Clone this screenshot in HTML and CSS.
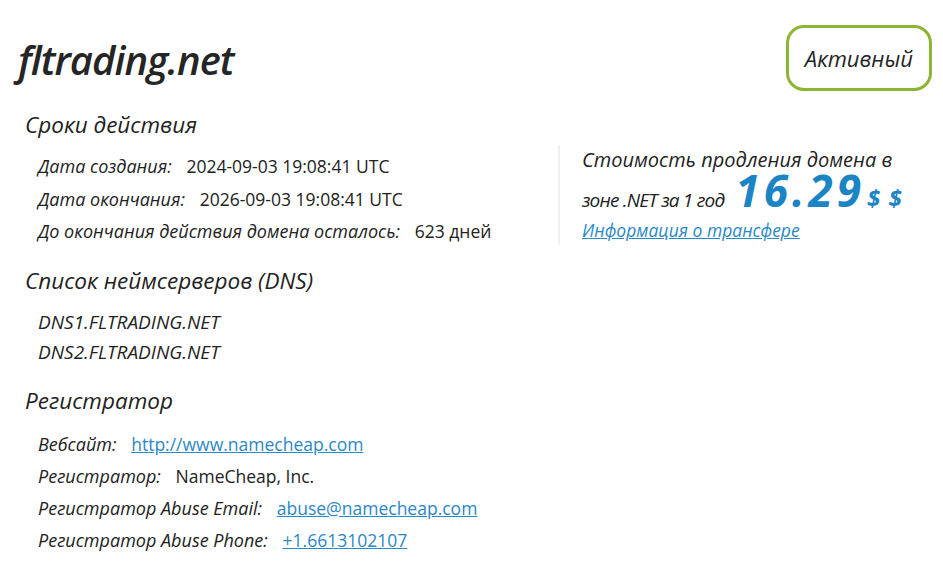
FILE: index.html
```
<!DOCTYPE html>
<html lang="ru">
<head>
    <meta charset="UTF-8">
    <meta name="viewport" content="width=device-width, initial-scale=1.0">
    <title>fltrading.net</title>
    <link rel="stylesheet" href="styles.css">
</head>
<body>
    <div class="page">
        <div class="head">
            <h1 class="domain">fltrading.net</h1>
            <span class="status">Активный</span>
        </div>

        <div class="top">
            <div class="col-main">
                <h2 class="section">Сроки действия</h2>
                <ul class="rows">
                    <li><span class="lbl">Дата создания:</span> <span class="val">2024-09-03 19:08:41 UTC</span></li>
                    <li><span class="lbl">Дата окончания:</span> <span class="val">2026-09-03 19:08:41 UTC</span></li>
                    <li><span class="lbl">До окончания действия домена осталось:</span> <span class="val">623 дней</span></li>
                </ul>
            </div>
            <div class="price">
                <p class="price-text">
                    <span class="price-line">Стоимость продления домена в</span>
                    <span class="price-line big"><span class="zone">зоне .NET за 1 год</span> <span class="amount">16.29</span><span class="cur">$ $</span></span>
                </p>
                <a class="transfer" href="#">Информация о трансфере</a>
            </div>
        </div>

        <h2 class="section">Список неймсерверов (DNS)</h2>
        <ul class="rows dns">
            <li>DNS1.FLTRADING.NET</li>
            <li>DNS2.FLTRADING.NET</li>
        </ul>

        <h2 class="section">Регистратор</h2>
        <ul class="rows reg">
            <li><span class="lbl">Вебсайт:</span> <a class="val" href="#">http://www.namecheap.com</a></li>
            <li><span class="lbl">Регистратор:</span> <span class="val">NameCheap, Inc.</span></li>
            <li><span class="lbl">Регистратор Abuse Email:</span> <a class="val" href="#">abuse@namecheap.com</a></li>
            <li><span class="lbl">Регистратор Abuse Phone:</span> <a class="val" href="#">+1.6613102107</a></li>
        </ul>
    </div>
</body>
</html>
```

FILE: styles.css
```
body { margin: 0; background: #fff; color: #222; font-family: "Open Sans", "DejaVu Sans", sans-serif; }
.page { padding: 20px 11px 0 18px; }
.head { display: flex; justify-content: space-between; align-items: flex-start; }
.domain { margin: 18px 0 0; font-size: 40px; font-weight: 600; font-style: italic; letter-spacing: -1px; line-height: 44px; color: #252525; }
.status { margin: 5px 0 0; padding: 0 16px; height: 60px; line-height: 60px; border: 3px solid #8cb531; border-radius: 18px; font-size: 22px; font-style: italic; font-weight: 500; color: #252525; }
.section { margin: 0; padding-left: 7px; font-size: 22.5px; line-height: 30px; font-weight: 500; font-style: italic; color: #222; }
.top { display: flex; margin-top: 19px; }
.col-main { width: 540px; }
.rows { list-style: none; margin: 0; padding: 10px 0 18px 20px; }
.rows li { font-size: 18px; line-height: 32.5px; }
.lbl { font-style: italic; margin-right: 10px; }
.val { font-size: 17.5px; line-height: 1; }
a.val { color: #2a88c8; text-decoration: underline; }
.dns { padding-top: 11px; padding-bottom: 19px; }
.dns li { font-size: 19px; font-style: italic; line-height: 30px; }
.reg { padding-top: 12px; }
.reg li { line-height: 32px; }
.price { align-self: flex-start; margin-top: 35px; padding: 0 0 2px 22px; border-left: 2px solid #f0f0f0; }
.price-text { margin: 0; font-size: 20px; font-style: italic; font-weight: 500; color: #222; }
.price-line { display: block; line-height: 30px; }
.price-line.big { line-height: 34px; }
.zone { font-size: 19px; letter-spacing: -0.8px; }
.amount { display: inline-block; margin-left: 6px; font-size: 44px; line-height: 30px; font-weight: 700; letter-spacing: 4px; color: #1b84c5; }
.cur { display: inline-block; margin-left: 2px; font-size: 24px; line-height: 24px; font-weight: 700; letter-spacing: 1px; color: #1b84c5; }
.transfer { display: block; font-size: 17.5px; line-height: 26px; font-style: italic; color: #2a88c8; }
```
